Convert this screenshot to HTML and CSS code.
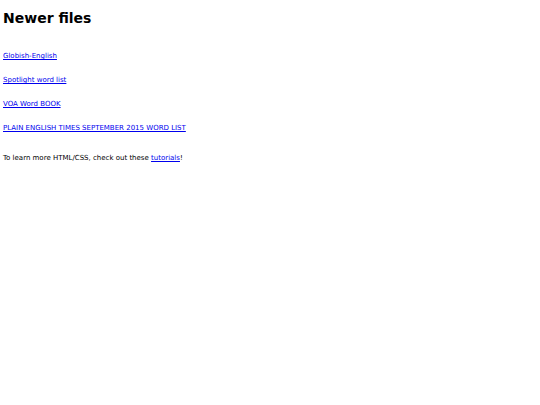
FILE: index.html
```html
<!DOCTYPE html>
<html>
<head>
<meta charset="utf-8">
<link rel="stylesheet" href="styles.css">
</head>
<body>
<h1 class="title">Newer files</h1>
<ul class="files">
<li class="file"><a href="#">Globish-English</a></li>
<li class="file"><a href="#">Spotlight word list</a></li>
<li class="file"><a href="#">VOA Word BOOK</a></li>
<li class="file"><a href="#">PLAIN ENGLISH TIMES SEPTEMBER 2015 WORD LIST</a></li>
</ul>
<p class="note">To learn more HTML/CSS, check out these <a href="#">tutorials</a>!</p>
</body>
</html>
```
FILE: styles.css
```css
body {
  margin: 0;
  padding: 4px 3px;
  font-family: "DejaVu Sans", Verdana, sans-serif;
  font-size: 7px;
  color: #000;
  background: #fff;
}
.title {
  font-size: 14px;
  font-weight: bold;
  margin: 5px 0 0 0;
  line-height: 18px;
}
.files {
  list-style: none;
  margin: 24px 0 0;
  padding: 0;
}
.file {
  line-height: 10px;
  margin-bottom: 14px;
}
a {
  color: #0000ee;
}
.note {
  margin: 20px 0 0;
  line-height: 10px;
}
```
